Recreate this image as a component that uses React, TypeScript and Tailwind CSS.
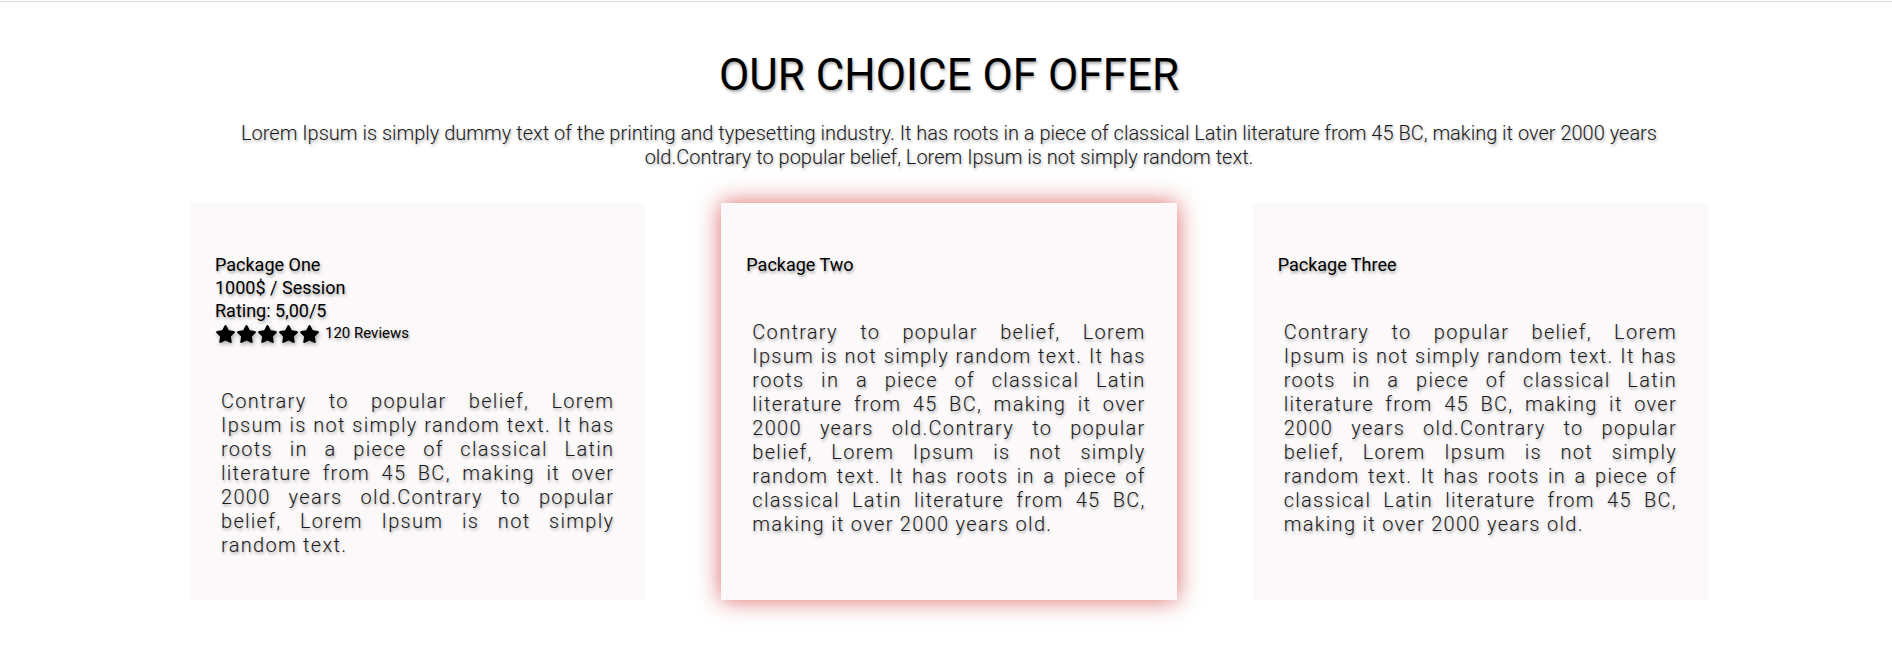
import { FaStar } from "react-icons/fa";

const body =
  "Contrary to popular belief, Lorem Ipsum is not simply random text. It has roots in a piece of classical Latin literature from 45 BC, making it over 2000 years old.Contrary to popular belief, Lorem Ipsum is not simply random text.";
const bodyLong =
  "Contrary to popular belief, Lorem Ipsum is not simply random text. It has roots in a piece of classical Latin literature from 45 BC, making it over 2000 years old.Contrary to popular belief, Lorem Ipsum is not simply random text. It has roots in a piece of classical Latin literature from 45 BC, making it over 2000 years old.";

const shadow = "[text-shadow:1px_2px_3px_rgba(0,0,0,0.35)]";

function Card({
  title,
  text,
  featured,
  children,
}: {
  title: string;
  text: string;
  featured?: boolean;
  children?: React.ReactNode;
}) {
  return (
    <div
      className={
        featured
          ? "h-[397px] bg-[#fbf9f9] px-[25px] pt-[50px] shadow-[0_0_22px_rgba(205,40,40,0.7)]"
          : "h-[397px] bg-[#fbf9f9] px-[25px] pt-[50px]"
      }
    >
      <div className={`text-[18px] leading-[23px] text-black ${shadow}`}>
        <div>{title}</div>
        {children}
      </div>
      <p
        className={`mt-[44px] px-[6px] text-justify text-[20px] font-light leading-[24px] tracking-[1.3px] text-[#1a1a1a] ${shadow}`}
      >
        {text}
      </p>
    </div>
  );
}

export default function App() {
  return (
    <div className="min-h-[671px] bg-white font-['Roboto',sans-serif]">
      <div className="mt-px h-px bg-[#d8d8d8]" />
      <div className="flex flex-col items-center pl-[6px]">
        <h1
          className={`mt-[47px] text-[44px] font-normal leading-[52px] text-black ${shadow}`}
        >
          OUR CHOICE OF OFFER
        </h1>
        <p
          className={`mt-[20px] w-[1430px] text-center text-[20px] font-light leading-[24px] text-[#1a1a1a] ${shadow}`}
        >
          Lorem Ipsum is simply dummy text of the printing and typesetting
          industry. It has roots in a piece of classical Latin literature from
          45 BC, making it over 2000 years old.Contrary to popular belief, Lorem
          Ipsum is not simply random text.
        </p>
        <div className="mt-[34px] grid w-[1518px] grid-cols-3 gap-[76px]">
          <Card title="Package One" text={body}>
            <div>1000$ / Session</div>
            <div>Rating: 5,00/5</div>
            <div className="flex items-center">
              <span className="flex [filter:drop-shadow(1px_2px_2px_rgba(0,0,0,0.35))]">
                {[0, 1, 2, 3, 4].map((i) => (
                  <FaStar key={i} className="h-[18px] w-[21px]" />
                ))}
              </span>
              <span className="ml-[5px] text-[15px]">120 Reviews</span>
            </div>
          </Card>
          <Card title="Package Two" text={bodyLong} featured />
          <Card title="Package Three" text={bodyLong} />
        </div>
      </div>
    </div>
  );
}
